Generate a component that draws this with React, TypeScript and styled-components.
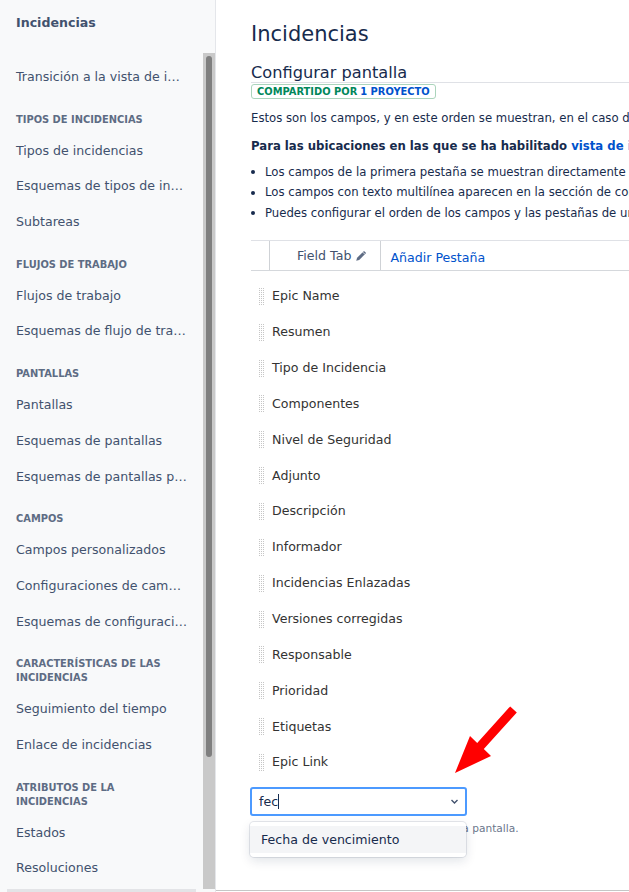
import React from "react";
import styled, { createGlobalStyle } from "styled-components";

const Global = createGlobalStyle`
  html, body { margin: 0; padding: 0; overflow: hidden; background: #fff; }
  body { font-family: "DejaVu Sans", Verdana, sans-serif; }
  #root { width: 629px; height: 892px; }
`;

const Page = styled.div`
  position: relative;
  display: flex;
  width: 629px;
  height: 892px;
  overflow: hidden;
  font-family: "DejaVu Sans", Verdana, sans-serif;
`;

/* ---------- Sidebar ---------- */
const Sidebar = styled.aside`
  width: 215px;
  flex: none;
  display: flex;
  flex-direction: column;
  background: #f8f9fa;
  border-right: 1px solid #e4e6ea;
`;

const SideTitle = styled.div`
  height: 53px;
  box-sizing: border-box;
  padding: 15px 16px 0;
  font-size: 12.6px;
  line-height: 16px;
  font-weight: bold;
  color: #42526e;
`;

const SideBody = styled.div`
  flex: 1;
  min-height: 0;
  display: flex;
`;

const NavList = styled.nav`
  flex: 1;
  min-width: 0;
  padding-top: 6px;
  overflow: hidden;
`;

const NavItem = styled.div`
  height: 35.7px;
  line-height: 35.7px;
  padding: 0 16px;
  font-size: 12.6px;
  color: #42526e;
  white-space: nowrap;
  overflow: hidden;
  text-overflow: ellipsis;
`;

const NavHeader = styled.div`
  margin: 18px 0 6px;
  padding: 0 16px;
  font-size: 9.9px;
  line-height: 14px;
  font-weight: bold;
  text-transform: uppercase;
  color: #5e6c84;
`;

const VTrack = styled.div`
  width: 12px;
  flex: none;
  box-sizing: border-box;
  padding: 3px 3px 0 3px;
  background: #c9c9c9;
`;

const VThumb = styled.div`
  width: 6px;
  height: 701px;
  border-radius: 3px;
  background: #7f7f7f;
`;

const HTrack = styled.div`
  height: 3px;
  flex: none;
  padding-left: 7px;
`;

const HThumb = styled.div`
  width: 189px;
  height: 3px;
  background: #e3e4e7;
`;

/* ---------- Main ---------- */
const Main = styled.main`
  flex: 1;
  min-width: 0;
  box-sizing: border-box;
  height: 891px;
  border-bottom: 1px solid #c6c6c6;
  overflow: hidden;
  background: #fff;
`;

const Content = styled.div`
  width: 900px;
  padding: 22px 0 0 35px;
  color: #172b4d;
`;

const H1 = styled.h1`
  margin: 0;
  font-size: 21px;
  line-height: 24px;
  font-weight: normal;
  color: #172b4d;
`;

const H2 = styled.h2`
  margin: 17px 0 0;
  font-size: 16.2px;
  line-height: 19px;
  font-weight: normal;
  color: #172b4d;
  border-bottom: 1px solid #dfe1e6;
`;

const Badge = styled.div`
  display: flex;
  width: fit-content;
  gap: 0.3em;
  margin-top: 1px;
  padding: 0 5px;
  border: 1px solid #abd4bc;
  border-radius: 3px;
  font-size: 9.9px;
  line-height: 13px;
  font-weight: bold;
  color: #00875a;
  text-transform: uppercase;
`;

const BadgeLink = styled.span`
  color: #0052cc;
`;

const Para = styled.p<{ $bold?: boolean; $top: number }>`
  margin: ${(p) => p.$top}px 0 0;
  font-size: 11.7px;
  line-height: 18px;
  white-space: nowrap;
  font-weight: ${(p) => (p.$bold ? "bold" : "normal")};
`;

const Link = styled.a`
  color: #0052cc;
  text-decoration: none;
`;

const Bullets = styled.ul`
  margin: 6.75px 0 0;
  padding: 0;
  list-style: none;
`;

const Bullet = styled.li`
  display: flex;
  align-items: center;
  font-size: 11.7px;
  line-height: 20.5px;
  white-space: nowrap;
`;

const Dot = styled.span`
  flex: none;
  width: 4px;
  height: 4px;
  border-radius: 50%;
  background: #172b4d;
  margin-right: 10px;
`;

const TabStrip = styled.div`
  margin-top: 16.75px;
  display: flex;
  align-items: stretch;
  height: 29px;
  padding-left: 18px;
  border-top: 1px solid #dfe1e6;
  border-bottom: 1px solid #d5d8dc;
`;

const Tab = styled.div`
  display: flex;
  align-items: center;
  gap: 4px;
  padding: 0 13px 0 27px;
  border-left: 1px solid #cfd2d6;
  border-right: 1px solid #cfd2d6;
  font-size: 12.6px;
  color: #42526e;
  background: #fff;
`;

const AddTab = styled.a`
  display: flex;
  align-items: center;
  padding: 3px 0 0 9px;
  font-size: 12.6px;
  color: #0052cc;
  text-decoration: none;
`;

const FieldList = styled.div`
  padding-top: 7px;
`;

const FieldRow = styled.div`
  height: 35.85px;
  display: flex;
  align-items: center;
  padding-left: 7px;
  gap: 8px;
  font-size: 12.6px;
  color: #333;
`;

const Grip = styled.span`
  flex: none;
  width: 6px;
  height: 18px;
  background-color: #c6c6c6;
  background-image: linear-gradient(90deg, #fff 1px, transparent 1px),
    linear-gradient(#fff 1px, transparent 1px);
  background-size: 2px 2px;
`;

const AddField = styled.div`
  position: relative;
  margin: 7px 0 0 -1px;
  width: 217px;
`;

const SelectBox = styled.div`
  box-sizing: border-box;
  height: 29px;
  display: flex;
  align-items: center;
  justify-content: space-between;
  padding: 0 6px 0 7px;
  border: 2px solid #4c9aff;
  border-radius: 3px;
  background: #fff;
  font-size: 12.6px;
  color: #172b4d;
`;

const Typed = styled.span`
  display: flex;
  align-items: center;
`;

const Caret = styled.span`
  width: 1px;
  height: 15px;
  background: #172b4d;
`;

const Help = styled.div`
  margin: 5px 0 0 1px;
  font-size: 10.6px;
  line-height: 14px;
  color: #6b778c;
  white-space: nowrap;
`;

const Menu = styled.div`
  position: absolute;
  top: 35px;
  left: 0;
  width: 216px;
  box-sizing: border-box;
  padding: 4px 0;
  background: #fff;
  border-radius: 4px;
  box-shadow: 0 0 0 1px rgba(9, 30, 66, 0.1), 0 4px 11px rgba(9, 30, 66, 0.12);
`;

const Option = styled.div`
  height: 27px;
  display: flex;
  align-items: center;
  padding-left: 11px;
  background: #f4f5f7;
  font-size: 12.6px;
  color: #172b4d;
`;

const Annotation = styled.svg`
  position: absolute;
  left: 0;
  top: 0;
  pointer-events: none;
`;

const sideEntries: Array<{ h?: string; i?: string }> = [
  { i: "Transición a la vista de incidencia nueva" },
  { h: "Tipos de incidencias" },
  { i: "Tipos de incidencias" },
  { i: "Esquemas de tipos de incidencia" },
  { i: "Subtareas" },
  { h: "Flujos de trabajo" },
  { i: "Flujos de trabajo" },
  { i: "Esquemas de flujo de trabajo" },
  { h: "Pantallas" },
  { i: "Pantallas" },
  { i: "Esquemas de pantallas" },
  { i: "Esquemas de pantallas por tipo de incidencia" },
  { h: "Campos" },
  { i: "Campos personalizados" },
  { i: "Configuraciones de campos" },
  { i: "Esquemas de configuración de campos" },
  { h: "Características de las incidencias" },
  { i: "Seguimiento del tiempo" },
  { i: "Enlace de incidencias" },
  { h: "Atributos de la incidencias" },
  { i: "Estados" },
  { i: "Resoluciones" },
  { i: "Prioridades" },
];

const fields = [
  "Epic Name",
  "Resumen",
  "Tipo de Incidencia",
  "Componentes",
  "Nivel de Seguridad",
  "Adjunto",
  "Descripción",
  "Informador",
  "Incidencias Enlazadas",
  "Versiones corregidas",
  "Responsable",
  "Prioridad",
  "Etiquetas",
  "Epic Link",
];

const Pencil = () => (
  <svg width="12" height="12" viewBox="0 0 16 16" aria-hidden>
    <path d="M12 1.2l2.8 2.8L5.6 13.2 1.6 14.4l1.2-4z" fill="#5e6c84" />
    <path d="M10.4 2.9l2.8 2.8" stroke="#fff" strokeWidth="1.1" />
  </svg>
);

const Chevron = () => (
  <svg width="9" height="9" viewBox="0 0 9 9" aria-hidden>
    <path d="M1.5 3l3 3 3-3" fill="none" stroke="#42526e" strokeWidth="1.4" />
  </svg>
);

export default function App() {
  return (
    <Page>
      <Global />
      <Sidebar>
        <SideTitle>Incidencias</SideTitle>
        <SideBody>
          <NavList>
            {sideEntries.map((e, k) =>
              e.h ? <NavHeader key={k}>{e.h}</NavHeader> : <NavItem key={k}>{e.i}</NavItem>
            )}
          </NavList>
          <VTrack>
            <VThumb />
          </VTrack>
        </SideBody>
        <HTrack>
          <HThumb />
        </HTrack>
      </Sidebar>
      <Main>
        <Content>
          <H1>Incidencias</H1>
          <H2>Configurar pantalla</H2>
          <Badge>
            <span>Compartido por</span>
            <BadgeLink>1 proyecto</BadgeLink>
          </Badge>
          <Para $top={10}>
            Estos son los campos, y en este orden se muestran, en el caso de que el usuario vea una incidencia.
          </Para>
          <Para $top={10} $bold>
            Para las ubicaciones en las que se ha habilitado <Link>vista de incidencia nueva</Link>:
          </Para>
          <Bullets>
            <Bullet>
              <Dot />
              Los campos de la primera pestaña se muestran directamente en la vista de incidencia.
            </Bullet>
            <Bullet>
              <Dot />
              Los campos con texto multilínea aparecen en la sección de contenido de la incidencia.
            </Bullet>
            <Bullet>
              <Dot />
              Puedes configurar el orden de los campos y las pestañas de una pantalla.
            </Bullet>
          </Bullets>
          <TabStrip>
            <Tab>
              Field Tab <Pencil />
            </Tab>
            <AddTab>Añadir Pestaña</AddTab>
          </TabStrip>
          <FieldList>
            {fields.map((f) => (
              <FieldRow key={f}>
                <Grip />
                {f}
              </FieldRow>
            ))}
          </FieldList>
          <AddField>
            <SelectBox>
              <Typed>
                fec
                <Caret />
              </Typed>
              <Chevron />
            </SelectBox>
            <Help>Escribe para añadir un campo nuevo a la pantalla.</Help>
            <Menu>
              <Option>Fecha de vencimiento</Option>
            </Menu>
          </AddField>
        </Content>
      </Main>
      <Annotation width="629" height="892" viewBox="0 0 629 892">
        <polygon
          points="510.2,706.4 477.2,742.95 470,736 455,773 491,756 483.8,749.05 516.8,712.6"
          fill="#ff0000"
        />
      </Annotation>
    </Page>
  );
}
